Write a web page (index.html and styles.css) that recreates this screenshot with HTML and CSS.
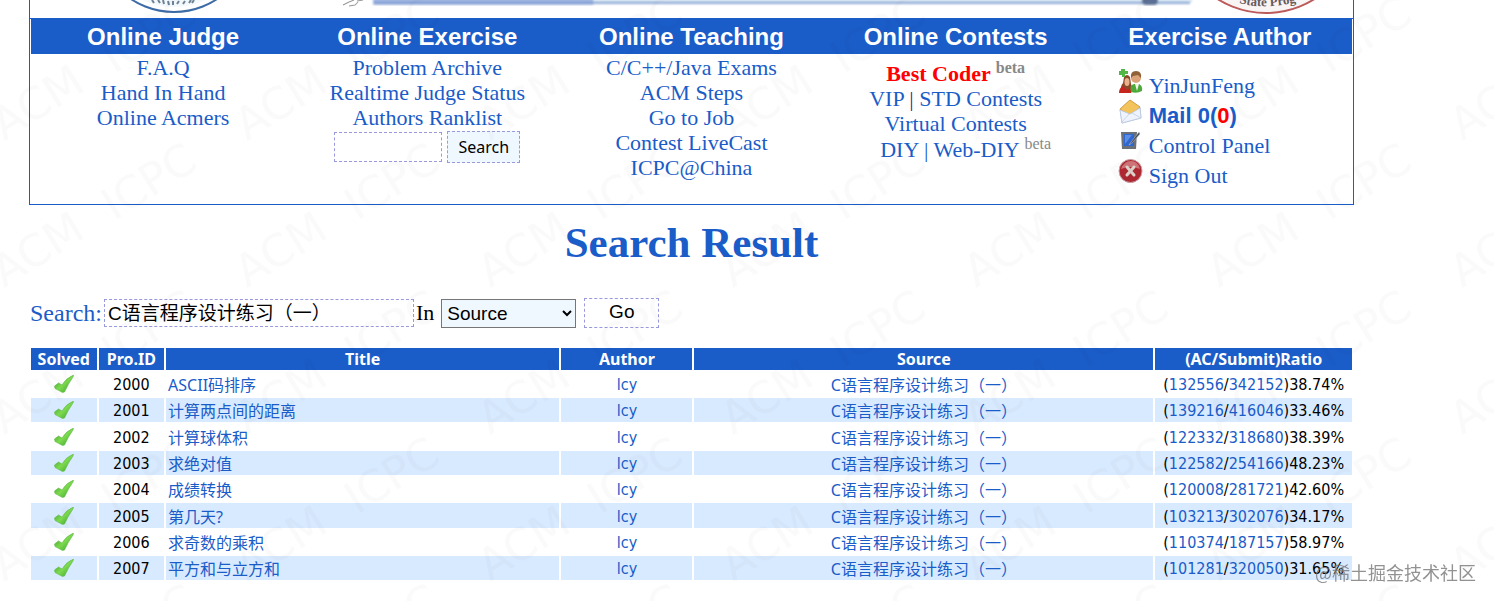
FILE: index.html
```html
<!DOCTYPE html>
<html lang="zh-CN">
<head>
  <meta charset="UTF-8">
  <meta name="viewport" content="width=device-width, initial-scale=1.0">
  <title>Search Result</title>
  <link rel="stylesheet" href="styles.css">
</head>
<body>
  <!-- shared icons -->
  <svg class="defs" width="0" height="0" aria-hidden="true">
    <defs>
      <linearGradient id="green" x1="0" y1="0" x2="1" y2="1">
        <stop offset="0" stop-color="#2f8f2a"/>
        <stop offset="0.5" stop-color="#7edb4e"/>
        <stop offset="1" stop-color="#2f9a2a"/>
      </linearGradient>
      <symbol id="tick" viewBox="0 0 20 18">
        <path d="M0.5 11 L4.5 8 L8 10 Q12 3 19.5 0 L19 2 Q14 9 10.5 17 L8.5 17.5 L1 13.5 Z" fill="url(#green)" stroke="#5fbb4c" stroke-width="0.6"/>
      </symbol>
    </defs>
  </svg>

  <div class="page">
    <div class="banner">
      <svg class="logo-left" width="100" height="17" viewBox="0 0 100 17">
        <circle cx="51" cy="-66" r="78" fill="none" stroke="#3d6ba5" stroke-width="2"/>
        <circle cx="51" cy="-66" r="73" fill="#f3f8fc"/>
        <path d="M29 0 l2 3 M35 0 l2 3 M40 0 l1 4 M45 1 l1 4 M50 1 v4 M54 4 l2-3 M60 4 l2-3 M66 3 l2-3 M71 0 l-2 3" stroke="#6d8295" stroke-width="2"/>
      </svg>
      <svg class="logo-title" height="17" viewBox="0 0 860 17" preserveAspectRatio="none">
        <filter id="soft"><feGaussianBlur stdDeviation="1"/></filter>
        <path d="M8 5 l6-3 5-2 M14 6 l6-1 3-3 M22 1 l6-1" stroke="#999" fill="none"/>
        <g filter="url(#soft)">
          <rect x="38" y="0" width="818" height="2" fill="#c4dcee"/>
          <rect x="39" y="2" width="815" height="2" fill="#8fa8d4"/>
          <rect x="38" y="-2" width="220" height="7" fill="#7896d4" opacity="0.6"/>
          <rect x="806" y="-4" width="16" height="9" rx="4" fill="#5c7095"/>
        </g>
      </svg>
      <svg class="logo-right" width="110" height="17" viewBox="0 0 110 17">
        <circle cx="51" cy="-78" r="91" fill="#faf5f5" stroke="#bb5b5b" stroke-width="2"/>
        <path id="arc" d="M24 3 Q52 11 90 0" fill="none"/>
        <text font-size="13" font-weight="bold" fill="#675a5c"><textPath href="#arc">State Prog</textPath></text>
      </svg>
    </div>

    <table class="nav">
      <tr>
        <th>Online Judge</th>
        <th>Online Exercise</th>
        <th>Online Teaching</th>
        <th>Online Contests</th>
        <th>Exercise Author</th>
      </tr>
      <tr>
        <td><a href="#">F.A.Q</a><br><a href="#">Hand In Hand</a><br><a href="#">Online Acmers</a></td>
        <td>
          <a href="#">Problem Archive</a><br><a href="#">Realtime Judge Status</a><br><a href="#">Authors Ranklist</a>
          <form class="quick">
            <input type="text" name="problem" aria-label="Problem">
            <button type="button">Search</button>
          </form>
        </td>
        <td><a href="#">C/C++/Java Exams</a><br><a href="#">ACM Steps</a><br><a href="#">Go to Job</a><br><a href="#">Contest LiveCast</a><br><a href="#">ICPC@China</a></td>
        <td>
          <div class="best"><a href="#">Best Coder</a> <sup>beta</sup></div>
          <a href="#">VIP</a> <span class="bar">|</span> <a href="#">STD Contests</a><br><a href="#">Virtual Contests</a>
          <div class="diy"><a href="#">DIY | Web-DIY</a> <sup>beta</sup></div>
        </td>
        <td>
          <ul class="author">
            <li>
              <svg width="26" height="26" viewBox="0 0 26 26">
                <path d="M3 25 Q2 18 5 15 L6 9 Q9 5 12 9 L13 16 Q15 20 13 25 Z" fill="#8c4a2d"/>
                <path d="M1 25 Q1 20 5 18 L9 22 L13 19 Q14 22 13 25 Z" fill="#c5251c"/>
                <ellipse cx="9" cy="14" rx="2.5" ry="4" fill="#eab28c"/>
                <path d="M13 24 Q11 17 16 16 L21 16 Q25 18 24 23 Q19 26 13 24 Z" fill="#4ea93b"/>
                <path d="M17 16 L19 23 L21 16 Z" fill="#f3f3e8"/>
                <circle cx="18" cy="10" r="5" fill="#dca278"/>
                <path d="M13 10 Q12 3 18 3 Q24 3 23 10 L20 7 L15 8 Z" fill="#906038"/>
                <path d="M3 1 h4 v2 h3 v3 h-3 v3 h-3 v-2 h-3 v-4 h2 Z" fill="#51b848"/>
              </svg>
              <a href="#">YinJunFeng</a>
            </li>
            <li>
              <svg width="26" height="26" viewBox="0 0 26 26">
                <path d="M2 11 L12 2 L22 9 L23 20 L4 25 Z" fill="#e3e9f6" stroke="#adb9d2" stroke-width="0.8"/>
                <path d="M2 11 L12 2 L22 9 L14 16 L9 16 Z" fill="#f3c45c" stroke="#d9982c" stroke-width="0.8"/>
                <path d="M2 12 L12 16 L22 10 L23 20 L4 25 Z" fill="#eef3fc" stroke="#b9c6e0" stroke-width="0.8"/>
                <path d="M4 24 L11 16 M23 20 L14 15" stroke="#c2cde4" stroke-width="0.8"/>
              </svg>
              <a class="mail" href="#">Mail 0(<span>0</span>)</a>
            </li>
            <li>
              <svg width="26" height="26" viewBox="0 0 26 26">
                <path d="M3 4 L19 4 L18 21 L4 21 Z" fill="#6a7179"/>
                <path d="M6 6 L16 6 L16 18 L6 18 Z" fill="#2f66cf"/>
                <path d="M7 7 L14 7 L7 16 Z" fill="#5b8ee6"/>
                <path d="M13 14 L21 4 L22 6 L14 15 L11 17 Z" fill="#444c55" stroke="#c9cdd2" stroke-width="0.5"/>
              </svg>
              <a href="#">Control Panel</a>
            </li>
            <li>
              <svg width="26" height="26" viewBox="0 0 26 26">
                <circle cx="12.5" cy="13" r="11.5" fill="#ad2832" stroke="#c9a0a3"/>
                <path d="M3 11 Q6 3 13 3 Q20 3 22 11 Q12 7 3 11 Z" fill="#cf7379"/>
                <path d="M9 9 L16 17 M16 9 L9 17" stroke="#ddd3cb" stroke-width="3" stroke-linecap="round"/>
              </svg>
              <a href="#">Sign Out</a>
            </li>
          </ul>
        </td>
      </tr>
    </table>

    <h1>Search Result</h1>

    <form class="search">
      <label for="content">Search:</label>
      <input type="text" id="content" value="C语言程序设计练习（一）">
      <label class="in" for="field">In</label>
      <select id="field">
        <option>Title</option>
        <option selected>Source</option>
        <option>Author</option>
      </select>
      <button type="button">Go</button>
    </form>

    <table class="list">
      <colgroup>
        <col class="w5"><col class="w5"><col class="w30"><col class="w10"><col class="w35"><col class="w15">
      </colgroup>
      <thead>
        <tr><th>Solved</th><th>Pro.ID</th><th>Title</th><th>Author</th><th>Source</th><th>(AC/Submit)Ratio</th></tr>
      </thead>
      <tbody>
        <tr>
          <td><svg class="tick"><use href="#tick"/></svg></td><td>2000</td>
          <td class="title"><a href="#">ASCII码排序</a></td><td><a href="#">lcy</a></td>
          <td class="source"><a href="#">C语言程序设计练习（一）</a></td>
          <td>(<a href="#">132556</a>/<a href="#">342152</a>)38.74%</td>
        </tr>
        <tr>
          <td><svg class="tick"><use href="#tick"/></svg></td><td>2001</td>
          <td class="title"><a href="#">计算两点间的距离</a></td><td><a href="#">lcy</a></td>
          <td class="source"><a href="#">C语言程序设计练习（一）</a></td>
          <td>(<a href="#">139216</a>/<a href="#">416046</a>)33.46%</td>
        </tr>
        <tr>
          <td><svg class="tick"><use href="#tick"/></svg></td><td>2002</td>
          <td class="title"><a href="#">计算球体积</a></td><td><a href="#">lcy</a></td>
          <td class="source"><a href="#">C语言程序设计练习（一）</a></td>
          <td>(<a href="#">122332</a>/<a href="#">318680</a>)38.39%</td>
        </tr>
        <tr>
          <td><svg class="tick"><use href="#tick"/></svg></td><td>2003</td>
          <td class="title"><a href="#">求绝对值</a></td><td><a href="#">lcy</a></td>
          <td class="source"><a href="#">C语言程序设计练习（一）</a></td>
          <td>(<a href="#">122582</a>/<a href="#">254166</a>)48.23%</td>
        </tr>
        <tr>
          <td><svg class="tick"><use href="#tick"/></svg></td><td>2004</td>
          <td class="title"><a href="#">成绩转换</a></td><td><a href="#">lcy</a></td>
          <td class="source"><a href="#">C语言程序设计练习（一）</a></td>
          <td>(<a href="#">120008</a>/<a href="#">281721</a>)42.60%</td>
        </tr>
        <tr>
          <td><svg class="tick"><use href="#tick"/></svg></td><td>2005</td>
          <td class="title"><a href="#">第几天?</a></td><td><a href="#">lcy</a></td>
          <td class="source"><a href="#">C语言程序设计练习（一）</a></td>
          <td>(<a href="#">103213</a>/<a href="#">302076</a>)34.17%</td>
        </tr>
        <tr>
          <td><svg class="tick"><use href="#tick"/></svg></td><td>2006</td>
          <td class="title"><a href="#">求奇数的乘积</a></td><td><a href="#">lcy</a></td>
          <td class="source"><a href="#">C语言程序设计练习（一）</a></td>
          <td>(<a href="#">110374</a>/<a href="#">187157</a>)58.97%</td>
        </tr>
        <tr>
          <td><svg class="tick"><use href="#tick"/></svg></td><td>2007</td>
          <td class="title"><a href="#">平方和与立方和</a></td><td><a href="#">lcy</a></td>
          <td class="source"><a href="#">C语言程序设计练习（一）</a></td>
          <td>(<a href="#">101281</a>/<a href="#">320050</a>)31.65%</td>
        </tr>
      </tbody>
    </table>
  </div>

  <!-- repeating background mark -->
  <svg class="pattern" aria-hidden="true">
    <defs>
      <pattern id="mark" width="243" height="147" patternUnits="userSpaceOnUse">
        <g id="word">
          <text x="4" y="141" transform="rotate(-32 4 141)">ACM</text>
          <text x="114" y="74" transform="rotate(-32 114 74)">ICPC</text>
        </g>
        <use href="#word" y="147"/>
        <use href="#word" x="243"/>
        <use href="#word" y="-147"/>
      </pattern>
    </defs>
    <rect width="100%" height="100%" fill="url(#mark)"/>
  </svg>
  <div class="credit">@稀土掘金技术社区</div>
</body>
</html>
```

FILE: styles.css
```css
body {
  margin: 0;
  background: #fff;
  color: #000;
  font-family: "Liberation Serif", "Noto Sans CJK SC", serif;
  font-size: 22px;
}
a {
  color: #1a5cc8;
  text-decoration: none;
}
.defs {
  position: absolute;
}
.page {
  padding: 0 140px 20px 29px;
}

/* top banner */
.banner {
  display: flex;
  height: 18px;
  padding: 0 28px 0 93px;
  border: 1px solid #1a5cc8;
  border-width: 0 1px;
  overflow: hidden;
  box-sizing: border-box;
}
.logo-title {
  flex: 1;
  min-width: 0;
  margin: 0 19px 0 112px;
}

/* menu */
.nav {
  width: 100%;
  height: 187px;
  table-layout: fixed;
  border: 1px solid #1a5cc8;
  border-collapse: separate;
  border-spacing: 0;
  padding: 0 1px;
}
.nav th {
  height: 35px;
  padding: 0;
  background: #1a5cc8;
  color: #fff;
  font: bold 24px/34px "Liberation Sans", Arial, sans-serif;
}
.nav td {
  padding: 1px 0 0;
  text-align: center;
  vertical-align: top;
  line-height: 25px;
}
.nav sup {
  color: #888;
  font-size: 16px;
  line-height: 16px;
}
.bar {
  color: #551a8b;
}
.best {
  padding-top: 5px;
  font-weight: bold;
}
.best a {
  color: #f00;
}
.diy {
  padding-left: 20px;
}
.quick {
  display: flex;
  justify-content: center;
  align-items: center;
  gap: 5px;
  padding-top: 1px;
}
.quick input {
  width: 108px;
  height: 30px;
}
.quick button {
  width: 73px;
  height: 32px;
  background: #f0f8ff;
  font: 16px "Noto Sans", sans-serif;
}
input,
button {
  box-sizing: border-box;
  margin: 0;
  padding: 0 3px;
  border: 1px dashed #9999dd;
  background: transparent;
  color: #000;
}
.author {
  margin: 0;
  padding: 13px 0 0 30px;
  list-style: none;
  text-align: left;
}
.author li {
  display: flex;
  gap: 5px;
  height: 30px;
}
.author a {
  line-height: 36px;
}
.author .mail {
  font-family: "Liberation Sans", Arial, sans-serif;
  font-weight: bold;
}
.mail span {
  color: #f00;
}

h1 {
  margin: 13px 0 30px;
  color: #1a5cc8;
  font-size: 43px;
  line-height: 50px;
  text-align: center;
}

/* search form */
.search {
  display: flex;
  align-items: center;
  height: 30px;
  margin-bottom: 18px;
}
.search label {
  padding: 0 2px 0 1px;
  color: #1a5cc8;
  font-size: 24px;
}
.search .in {
  padding: 0 7px 0 2px;
  color: #000;
  font-size: 22px;
}
.search input,
.search select,
.search button {
  font: 19px "Liberation Sans", "Noto Sans CJK SC", sans-serif;
}
.search input {
  width: 310px;
  height: 28px;
  padding-bottom: 3px;
}
.search select {
  width: 135px;
  height: 29px;
  padding-left: 1px;
  border: 1px solid #767676;
  background: #f0f8ff;
}
.search button {
  width: 75px;
  height: 30px;
  margin-left: 8px;
  padding-bottom: 2px;
}

/* problem list */
.list {
  width: 100%;
  table-layout: fixed;
  border-spacing: 2px;
  font: 16px/22px "DejaVu Sans Condensed", "Noto Sans", "Noto Sans CJK SC", sans-serif;
  text-align: center;
}
.w5 { width: 5%; }
.w10 { width: 10%; }
.w15 { width: 15%; }
.w30 { width: 30%; }
.w35 { width: 35%; }
.list th {
  padding: 0;
  background: #1a5cc8;
  color: #fff;
  font-family: "Noto Sans", sans-serif;
}
.list td {
  height: 22px;
  padding: 2px 0 0;
}
.list tr:nth-child(3n) td {
  height: 23px;
}
.list tr:nth-child(even) td {
  background: #d8eaff;
}
.list .title,
.list .source {
  font-family: "Noto Sans", "Noto Sans CJK SC", sans-serif;
}
.list .title {
  padding-left: 2px;
  text-align: left;
}
.tick {
  display: block;
  width: 20px;
  height: 18px;
  margin: 0 auto 2px;
}

.pattern {
  position: absolute;
  top: 0;
  left: 0;
  width: 100%;
  height: 100%;
  pointer-events: none;
}
.pattern text {
  fill: #000;
  fill-opacity: 0.02;
  font: 44px "DejaVu Sans", sans-serif;
}
.credit {
  position: fixed;
  right: 18px;
  bottom: 16px;
  color: #777;
  opacity: 0.8;
  font: 18px/26px "Noto Sans CJK SC", sans-serif;
}
```
